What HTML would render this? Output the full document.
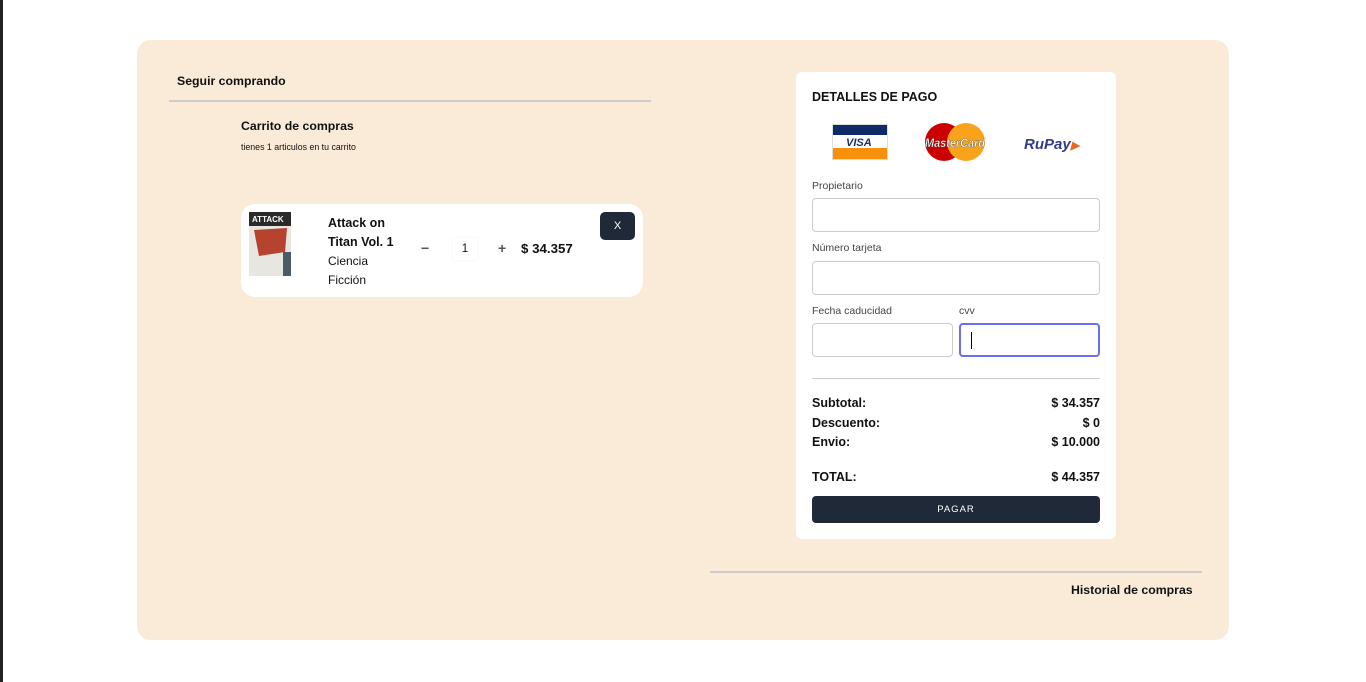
<!DOCTYPE html>
<html><head><meta charset="utf-8"><style>
*{box-sizing:border-box;margin:0;padding:0}
body{width:1366px;height:682px;background:#fff;font-family:"Liberation Sans",sans-serif;color:#111;position:relative;overflow:hidden}
.edge{position:absolute;left:0;top:0;width:3px;height:682px;background:#222}
.main{position:absolute;left:137px;top:40px;width:1092px;height:600px;background:#f9ebd7;border-radius:14px}
.abs{position:absolute}
.b{font-weight:bold}
.card{position:absolute;left:241px;top:204px;width:402px;height:93px;background:#fff;border-radius:14px}
.pay{position:absolute;left:796px;top:72px;width:320px;height:467px;background:#fff;border-radius:6px}
.lbl{position:absolute;left:16px;font-size:10.5px;color:#444}
.inp{position:absolute;height:34px;border:1px solid #ccc;border-radius:4px;background:#fff}
.row{position:absolute;left:16px;width:288px;font-size:12.5px;font-weight:bold;display:flex;justify-content:space-between}
</style></head><body>
<div class="edge"></div>
<div class="main"></div>
<div class="abs b" style="left:177px;top:74px;font-size:12.3px">Seguir comprando</div>
<div class="abs" style="left:169px;top:100px;width:482px;height:2px;background:#ccc"></div>
<div class="abs b" style="left:241px;top:119px;font-size:12.3px">Carrito de compras</div>
<div class="abs" style="left:241px;top:142px;font-size:8.8px">tienes 1 articulos en tu carrito</div>
<div class="card">
 <svg class="abs" style="left:8px;top:8px" width="42" height="64"><rect width="42" height="64" fill="#e8e6e0"/><rect width="42" height="14" fill="#2a2a2a"/><text x="3" y="10" font-size="8" font-weight="bold" fill="#fff" font-family="Liberation Sans">ATTACK</text><path d="M5 18 L38 16 L36 40 L10 44 Z" fill="#b5432d"/><rect x="34" y="40" width="8" height="24" fill="#4a5a66"/></svg>
 <div class="abs b" style="left:87px;top:10px;font-size:12.5px;line-height:19px">Attack on<br>Titan Vol. 1</div>
 <div class="abs" style="left:87px;top:48px;font-size:12px;line-height:19px">Ciencia<br>Ficción</div>
 <div class="abs b" style="left:180px;top:36px;font-size:14px;color:#555">−</div>
 <div class="abs" style="left:212px;top:34px;width:24px;height:22px;font-size:11.5px;text-align:center;line-height:22px;box-shadow:0 0 2px #eee">1</div>
 <div class="abs b" style="left:257px;top:36px;font-size:14px;color:#555">+</div>
 <div class="abs b" style="left:280px;top:37px;font-size:13.3px">$ 34.357</div>
 <div class="abs" style="left:359px;top:8px;width:35px;height:28px;background:#1f2937;border-radius:5px;color:#fff;font-size:11px;text-align:center;line-height:28px">X</div>
</div>
<div class="pay">
 <div class="abs b" style="left:16px;top:18px;font-size:12.5px">DETALLES DE PAGO</div>
 <svg class="abs" style="left:36px;top:52px" width="56" height="36"><rect x=".5" y=".5" width="55" height="35" fill="#fff" stroke="#ddd"/><rect x="1" y="1" width="54" height="10" fill="#0e2a67"/><rect x="1" y="24" width="54" height="11" fill="#f7910c"/><text x="14" y="22" font-size="11" font-weight="bold" font-style="italic" fill="#1a2f6b" font-family="Liberation Sans">VISA</text></svg>
 <svg class="abs" style="left:126px;top:50px" width="66" height="40"><circle cx="22" cy="20" r="19" fill="#cc0000"/><circle cx="44" cy="20" r="19" fill="#f9a21b"/><text x="3" y="25" font-size="11.5" font-weight="bold" font-style="italic" fill="#fff" stroke="#333" stroke-width=".3" font-family="Liberation Sans" textLength="60" lengthAdjust="spacingAndGlyphs">MasterCard</text></svg>
 <div class="abs b" style="left:228px;top:64px;font-size:15px;font-style:italic;color:#2f3d8c">RuPay<span style="color:#e86a1f;font-size:11px">▶</span></div>
 <div class="lbl" style="top:108px">Propietario</div>
 <div class="inp" style="left:16px;top:126px;width:288px"></div>
 <div class="lbl" style="top:170px">Número tarjeta</div>
 <div class="inp" style="left:16px;top:189px;width:288px"></div>
 <div class="lbl" style="top:233px">Fecha caducidad</div>
 <div class="lbl" style="top:233px;left:163px">cvv</div>
 <div class="inp" style="left:16px;top:251px;width:141px"></div>
 <div class="inp" style="left:163px;top:251px;width:141px;border:2px solid #6b6ef0"><div style="position:absolute;left:10px;top:7px;width:1px;height:17px;background:#000"></div></div>
 <div class="abs" style="left:16px;top:306px;width:288px;height:1px;background:#ccc"></div>
 <div class="row" style="top:324px"><span>Subtotal:</span><span>$ 34.357</span></div>
 <div class="row" style="top:344px"><span>Descuento:</span><span>$ 0</span></div>
 <div class="row" style="top:363px"><span>Envio:</span><span>$ 10.000</span></div>
 <div class="row" style="top:398px"><span>TOTAL:</span><span>$ 44.357</span></div>
 <div class="abs" style="left:16px;top:424px;width:288px;height:27px;background:#1f2937;border-radius:4px;color:#fff;font-size:9.5px;letter-spacing:1px;text-align:center;line-height:27px">PAGAR</div>
</div>
<div class="abs" style="left:710px;top:571px;width:492px;height:2px;background:#ccc"></div>
<div class="abs b" style="left:1071px;top:583px;font-size:12.3px">Historial de compras</div>
</body></html>
